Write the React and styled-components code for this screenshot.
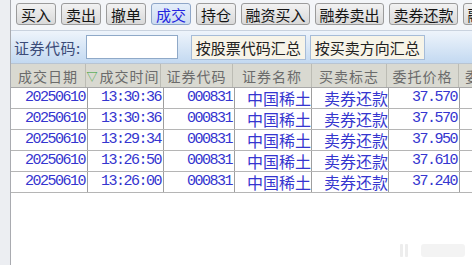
import React from 'react';
import styled, { createGlobalStyle } from 'styled-components';

const GlobalStyle = createGlobalStyle`
  html, body {
    margin: 0;
    padding: 0;
    width: 472px;
    height: 265px;
    overflow: hidden;
    background: #ffffff;
  }
  * { box-sizing: border-box; }
`;

const CJK = `"Noto Sans CJK SC", "Noto Sans", sans-serif`;
const MONO = `"Liberation Mono", "DejaVu Sans Mono", monospace`;

const Window = styled.div`
  position: relative;
  display: flex;
  width: 472px;
  height: 265px;
  font-family: ${CJK};
`;

const SideStrip = styled.div`
  width: 11px;
  flex: none;
  background: #eceef2;
  border-right: 1px solid #a9abb0;
`;

const Main = styled.div`
  flex: 1;
  display: flex;
  flex-direction: column;
  min-width: 0;
  overflow: hidden;
`;

const Toolbar = styled.div`
  height: 31px;
  display: flex;
  gap: 5px;
  padding: 3px 0 0 5px;
  background: #f3f5f8;
  border-bottom: 1px solid #c9d2de;
  white-space: nowrap;
`;

const ToolButton = styled.div`
  flex: none;
  width: ${p => (p.$wide ? 69 : 40)}px;
  height: 22px;
  display: flex;
  align-items: center;
  justify-content: center;
  font-size: 15px;
  line-height: 1;
  border-radius: 3px;
  border: 1px solid ${p => (p.$active ? '#8ea6c8' : '#9b9b9b')};
  background: ${p =>
    p.$active
      ? 'linear-gradient(#e4eefa, #cddcf0)'
      : 'linear-gradient(#f2f2f2, #d9d9d9)'};
  color: ${p => (p.$active ? '#2424e0' : '#151515')};
`;

const FilterBar = styled.div`
  height: 33px;
  display: flex;
  align-items: center;
  padding: 0 0 0 3px;
  background: linear-gradient(#eef4fb, #c3d9f1);
  border-bottom: 1px solid #b8c4d2;
`;

const Label = styled.span`
  font-size: 15px;
  color: #3b4b78;
  letter-spacing: 0.5px;
`;

const CodeInput = styled.div`
  width: 92px;
  height: 24px;
  margin-left: 5px;
  background: #ffffff;
  border: 1px solid #8fa9c8;
`;

const SumButton = styled.div`
  height: 25px;
  margin-left: ${p => (p.$first ? 13 : 4)}px;
  padding: 0 4px;
  display: flex;
  align-items: center;
  font-size: 15px;
  color: #222;
  background: #f7f4e8;
  border: 1px solid #a6bcd8;
  white-space: nowrap;
`;

const HeaderRow = styled.div`
  height: 24px;
  display: grid;
  grid-template-columns: 75px 75px 72px 79px 75px 72px 1fr;
  background: #d9d9d1;
  border-bottom: 1px solid #a8a8a8;
  white-space: nowrap;
`;

const HeadCell = styled.div`
  display: flex;
  align-items: center;
  justify-content: center;
  font-size: 14px;
  line-height: 20px;
  color: #6b6b6b;
  letter-spacing: 1px;
  overflow: hidden;
  border-right: 1px solid #bcbcb4;
  &:last-child {
    justify-content: flex-start;
    padding-left: 6px;
    border-right: none;
  }
`;

const SortMark = styled.span`
  color: #2e9d2e;
  font-size: 11px;
  margin-right: 2px;
  letter-spacing: 0;
`;

const Body = styled.div`
  flex: 1;
  background: #ffffff;
`;

const DataRow = styled.div`
  height: 21px;
  display: grid;
  grid-template-columns: 77px 76px 71px 77px 77px 71px 1fr;
  border-bottom: 1px solid #b5b5b5;
`;

const Cell = styled.div`
  display: flex;
  align-items: center;
  justify-content: flex-end;
  padding-right: ${p => (p.$mono ? 2 : 0)}px;
  border-right: 1px solid #9e9e9e;
  color: #3535cf;
  font-family: ${p => (p.$mono ? MONO : CJK)};
  font-size: ${p => (p.$mono ? 15 : 16)}px;
  line-height: 20px;
  letter-spacing: ${p => (p.$mono ? '-1.5px' : '0')};
  white-space: nowrap;
  overflow: hidden;
  &:last-child {
    border-right: none;
  }
`;

const Watermark = styled.div`
  position: absolute;
  right: 7px;
  bottom: 8px;
  display: flex;
  align-items: center;
  gap: 12px;
  opacity: 0.6;
`;

const rows = [
  ['20250610', '13:30:36', '000831', '中国稀土', '卖券还款', '37.570'],
  ['20250610', '13:30:36', '000831', '中国稀土', '卖券还款', '37.570'],
  ['20250610', '13:29:34', '000831', '中国稀土', '卖券还款', '37.950'],
  ['20250610', '13:26:50', '000831', '中国稀土', '卖券还款', '37.610'],
  ['20250610', '13:26:00', '000831', '中国稀土', '卖券还款', '37.240'],
];

const tools = ['买入', '卖出', '撤单', '成交', '持仓', '融资买入', '融券卖出', '卖券还款', '融券买入'];

export default function App() {
  return (
    <Window>
      <GlobalStyle />
      <SideStrip />
      <Main>
        <Toolbar>
          {tools.map(t => (
            <ToolButton key={t} $active={t === '成交'} $wide={t.length > 2}>
              {t}
            </ToolButton>
          ))}
        </Toolbar>
        <FilterBar>
          <Label>证券代码:</Label>
          <CodeInput />
          <SumButton $first>按股票代码汇总</SumButton>
          <SumButton>按买卖方向汇总</SumButton>
        </FilterBar>
        <HeaderRow>
          <HeadCell>成交日期</HeadCell>
          <HeadCell><SortMark>▽</SortMark>成交时间</HeadCell>
          <HeadCell>证券代码</HeadCell>
          <HeadCell>证券名称</HeadCell>
          <HeadCell>买卖标志</HeadCell>
          <HeadCell>委托价格</HeadCell>
          <HeadCell>委托数量</HeadCell>
        </HeaderRow>
        <Body>
          {rows.map((r, i) => (
            <DataRow key={i}>
              <Cell $mono>{r[0]}</Cell>
              <Cell $mono>{r[1]}</Cell>
              <Cell $mono>{r[2]}</Cell>
              <Cell>{r[3]}</Cell>
              <Cell>{r[4]}</Cell>
              <Cell $mono>{r[5]}</Cell>
              <Cell />
            </DataRow>
          ))}
        </Body>
      </Main>
      <Watermark>
        <svg width="10" height="13" viewBox="0 0 10 13">
          <rect x="1" y="0" width="3" height="13" rx="1" fill="#e2e2e2" />
          <rect x="6" y="0" width="3" height="13" rx="1" fill="#e2e2e2" />
        </svg>
        <svg width="44" height="13" viewBox="0 0 44 13">
          <rect x="0" y="0" width="44" height="13" rx="3" fill="#ececec" />
        </svg>
      </Watermark>
    </Window>
  );
}
